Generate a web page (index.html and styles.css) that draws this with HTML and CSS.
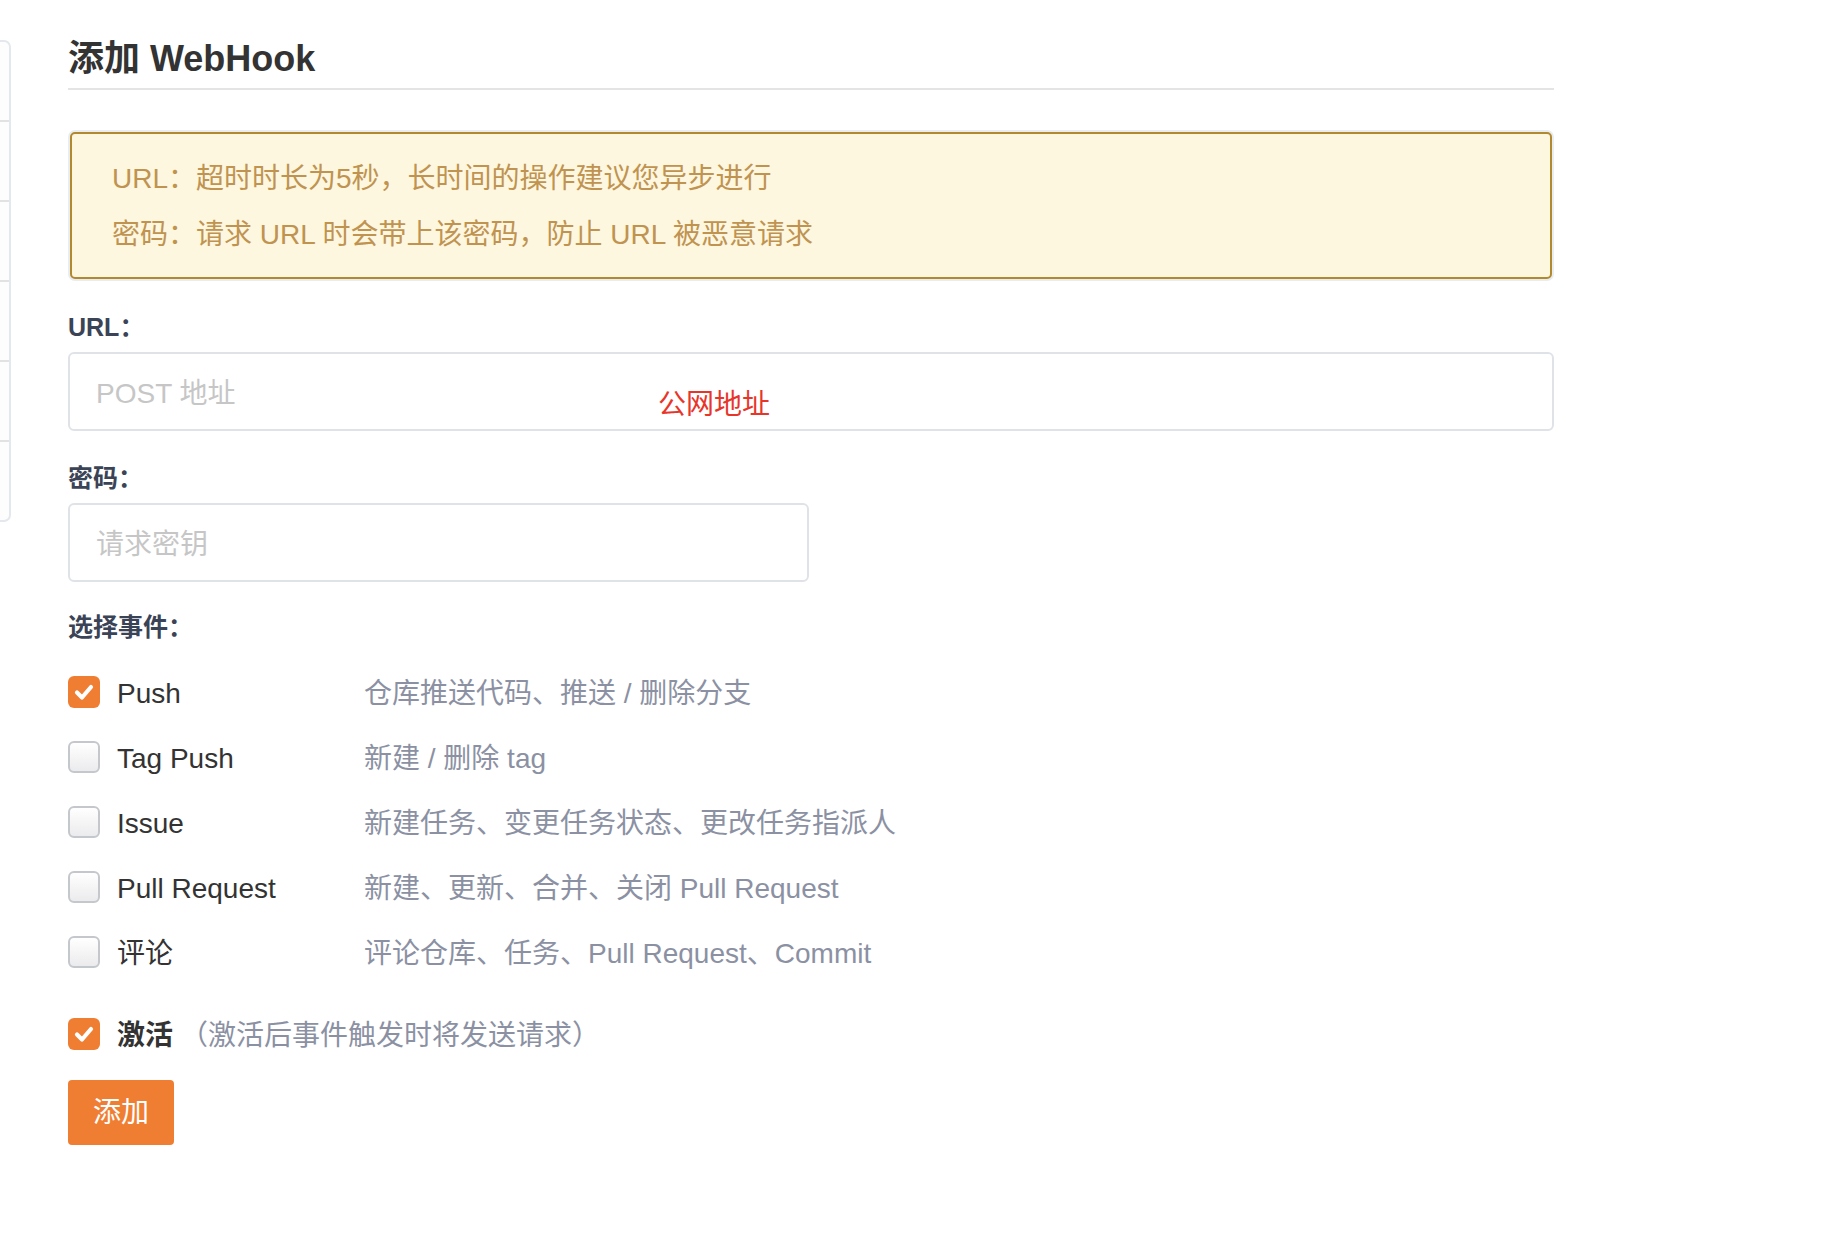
FILE: index.html
```html
<!DOCTYPE html>
<html lang="zh-CN">
<head>
<meta charset="utf-8">
<title>添加 WebHook</title>
<link rel="stylesheet" href="styles.css">
</head>
<body>
<div class="page">
  <aside class="side">
    <div class="side-item"></div>
    <div class="side-item"></div>
    <div class="side-item"></div>
    <div class="side-item"></div>
    <div class="side-item"></div>
    <div class="side-item"></div>
  </aside>
  <main class="main">
    <h2 class="title">添加 WebHook</h2>
    <div class="alert">
      <p class="alert-line">URL：超时时长为5秒，长时间的操作建议您异步进行</p>
      <p class="alert-line">密码：请求 URL 时会带上该密码，防止 URL 被恶意请求</p>
    </div>

    <label class="field-label field-first" for="url">URL：</label>
    <div class="field-wrap">
      <input id="url" class="input input-full" type="text" placeholder="POST 地址">
      <span class="note">公网地址</span>
    </div>

    <label class="field-label" for="pwd">密码：</label>
    <input id="pwd" class="input input-half" type="text" placeholder="请求密钥">

    <div class="field-label field-events">选择事件：</div>
    <ul class="events">
      <li class="event">
        <span class="check on"><svg viewBox="0 0 32 32" width="32" height="32"><polyline points="9,16.5 14,21.5 23,11" fill="none" stroke="#fff" stroke-width="4.2" stroke-linecap="round" stroke-linejoin="round"/></svg></span>
        <span class="ev-name">Push</span>
        <span class="ev-desc">仓库推送代码、推送 / 删除分支</span>
      </li>
      <li class="event">
        <span class="check"></span>
        <span class="ev-name">Tag Push</span>
        <span class="ev-desc">新建 / 删除 tag</span>
      </li>
      <li class="event">
        <span class="check"></span>
        <span class="ev-name">Issue</span>
        <span class="ev-desc">新建任务、变更任务状态、更改任务指派人</span>
      </li>
      <li class="event">
        <span class="check"></span>
        <span class="ev-name">Pull Request</span>
        <span class="ev-desc">新建、更新、合并、关闭 Pull Request</span>
      </li>
      <li class="event">
        <span class="check"></span>
        <span class="ev-name">评论</span>
        <span class="ev-desc">评论仓库、任务、Pull Request、Commit</span>
      </li>
    </ul>

    <div class="active-row">
      <span class="check on"><svg viewBox="0 0 32 32" width="32" height="32"><polyline points="9,16.5 14,21.5 23,11" fill="none" stroke="#fff" stroke-width="4.2" stroke-linecap="round" stroke-linejoin="round"/></svg></span>
      <span class="active-name">激活</span>
      <span class="active-desc">（激活后事件触发时将发送请求）</span>
    </div>

    <button class="btn" type="button">添加</button>
  </main>
</div>
</body>
</html>
```

FILE: styles.css
```css
* { box-sizing: border-box; }

html, body {
  margin: 0;
  padding: 0;
  background: #ffffff;
}

body {
  font-family: "Liberation Sans", "Noto Sans CJK SC", sans-serif;
  color: #333333;
}

.page {
  display: flex;
  align-items: flex-start;
}

.side {
  width: 11px;
  margin-top: 40px;
  border: 2px solid #e3e8ee;
  border-left: none;
  border-radius: 0 7px 7px 0;
  background: #fdfdfd;
  display: flex;
  flex-direction: column;
}

.side-item {
  height: 80px;
  border-top: 2px solid #e2e2e2;
}

.side-item:first-child {
  height: 78px;
  border-top: none;
}

.main {
  margin-left: 57px;
  width: 1486px;
  padding-top: 37px;
  display: flex;
  flex-direction: column;
  align-items: flex-start;
}

.title {
  margin: 0;
  width: 100%;
  font-size: 36px;
  line-height: 43px;
  font-weight: bold;
  color: #333333;
  padding-bottom: 8px;
  border-bottom: 2px solid #e4e4e4;
}

.alert {
  margin: 42px 2px 0 2px;
  align-self: stretch;
  background: #fdf7e0;
  border: 2px solid #b3892f;
  border-radius: 5px;
  box-shadow: 0 0 0 2px #e8edf2;
  padding: 17px 40px 14px 40px;
}

.alert-line {
  margin: 0;
  font-size: 28px;
  line-height: 56px;
  color: #c09350;
}

.field-label {
  display: block;
  margin-top: 29px;
  font-size: 25px;
  line-height: 36px;
  font-weight: bold;
  color: #3b4356;
}

.field-first {
  margin-top: 30px;
}

.field-events {
  margin-top: 27px;
}

.field-wrap {
  position: relative;
  margin-top: 7px;
  width: 100%;
}

.input {
  display: block;
  height: 79px;
  border: 2px solid #dfe3e8;
  border-radius: 6px;
  background: #ffffff;
  padding: 4px 26px 0 26px;
  font-family: "Liberation Sans", "Noto Sans CJK SC", sans-serif;
  font-size: 28px;
  color: #333333;
  outline: none;
}

.input::placeholder {
  color: #c6c6c6;
}

.input-full {
  width: 100%;
}

.input-half {
  margin-top: 7px;
  width: 741px;
}

.note {
  position: absolute;
  left: 590px;
  top: 39px;
  font-size: 28px;
  line-height: 28px;
  color: #e8352a;
}

.events {
  list-style: none;
  margin: 16px 0 0 0;
  padding: 0;
}

.event {
  display: grid;
  grid-template-columns: 49px 247px auto;
  align-items: center;
  height: 65px;
}

.check {
  display: block;
  width: 32px;
  height: 32px;
  border-radius: 6px;
  border: 2px solid #c4c7cc;
  background: linear-gradient(#ffffff, #ebebed);
  margin-top: -3px;
}

.check.on {
  border: none;
  background: #f07e32;
}

.check svg {
  display: block;
}

.ev-name {
  font-size: 28px;
  line-height: 36px;
  color: #333333;
}

.ev-desc {
  font-size: 28px;
  line-height: 36px;
  color: #8b91a3;
}

.active-row {
  margin-top: 17px;
  height: 65px;
  display: flex;
  align-items: center;
}

.active-name {
  margin-left: 17px;
  font-size: 28px;
  line-height: 36px;
  font-weight: bold;
  color: #333333;
}

.active-desc {
  margin-left: 7px;
  font-size: 28px;
  line-height: 36px;
  color: #8b91a3;
}

.btn {
  margin-top: 12px;
  height: 65px;
  padding: 0 25px;
  border: none;
  border-radius: 4px;
  background: #f07e32;
  color: #ffffff;
  font-family: "Liberation Sans", "Noto Sans CJK SC", sans-serif;
  font-size: 28px;
  line-height: 65px;
}
```
